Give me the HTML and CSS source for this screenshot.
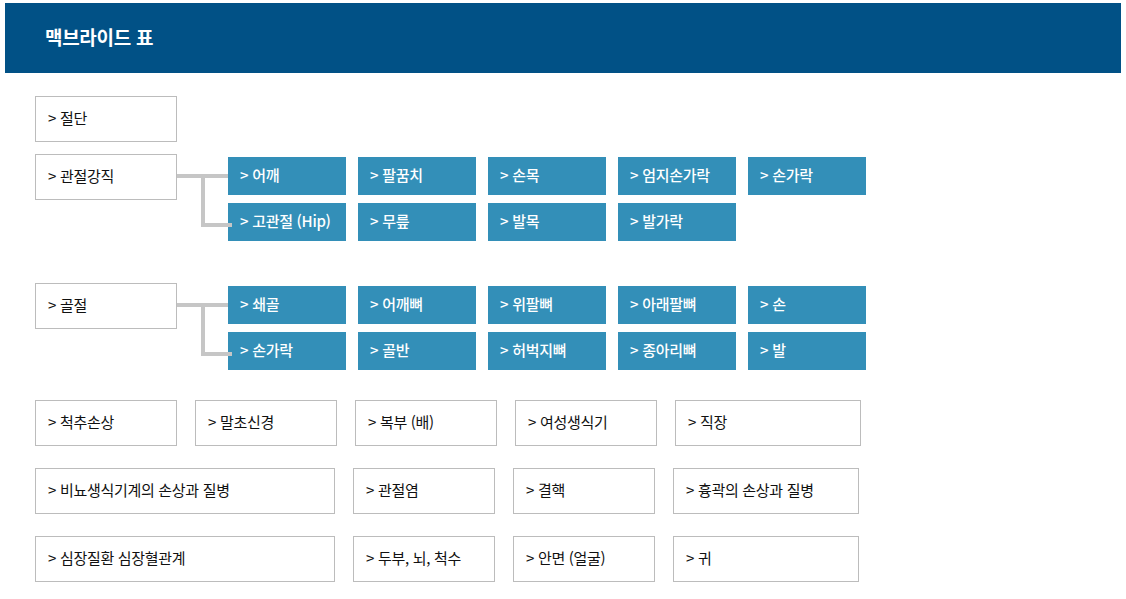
FILE: index.html
```html
<!DOCTYPE html>
<html lang="ko">
<head>
  <meta charset="UTF-8" />
  <meta name="viewport" content="width=device-width, initial-scale=1.0" />
  <title>맥브라이드 표</title>
  <link rel="stylesheet" href="styles.css">
</head>
<body>
  <header class="page-head">
    <h1>맥브라이드 표</h1>
  </header>

  <main class="mcbride">
    <div class="item">&gt; 절단</div>

    <div class="group">
      <div class="item">&gt; 관절강직</div>
      <div class="connector"></div>
      <ul class="sub-list">
        <li>&gt; 어깨</li>
        <li>&gt; 팔꿈치</li>
        <li>&gt; 손목</li>
        <li>&gt; 엄지손가락</li>
        <li>&gt; 손가락</li>
        <li>&gt; 고관절 (Hip)</li>
        <li>&gt; 무릎</li>
        <li>&gt; 발목</li>
        <li>&gt; 발가락</li>
      </ul>
    </div>

    <div class="group group-last">
      <div class="item">&gt; 골절</div>
      <div class="connector"></div>
      <ul class="sub-list">
        <li>&gt; 쇄골</li>
        <li>&gt; 어깨뼈</li>
        <li>&gt; 위팔뼈</li>
        <li>&gt; 아래팔뼈</li>
        <li>&gt; 손</li>
        <li>&gt; 손가락</li>
        <li>&gt; 골반</li>
        <li>&gt; 허벅지뼈</li>
        <li>&gt; 종아리뼈</li>
        <li>&gt; 발</li>
      </ul>
    </div>

    <div class="row">
      <div class="item">&gt; 척추손상</div>
      <div class="item">&gt; 말초신경</div>
      <div class="item">&gt; 복부 (배)</div>
      <div class="item">&gt; 여성생식기</div>
      <div class="item item-long">&gt; 직장</div>
    </div>

    <div class="row">
      <div class="item item-wide">&gt; 비뇨생식기계의 손상과 질병</div>
      <div class="item">&gt; 관절염</div>
      <div class="item">&gt; 결핵</div>
      <div class="item item-long">&gt; 흉곽의 손상과 질병</div>
    </div>

    <div class="row">
      <div class="item item-wide">&gt; 심장질환 심장혈관계</div>
      <div class="item">&gt; 두부, 뇌, 척수</div>
      <div class="item">&gt; 안면 (얼굴)</div>
      <div class="item item-long">&gt; 귀</div>
    </div>
  </main>
</body>
</html>
```

FILE: styles.css
```css
* {
  margin: 0;
  padding: 0;
  box-sizing: border-box;
  font-family: 'Noto Sans CJK KR', 'Noto Sans', sans-serif;
}

body {
  background: #fff;
  color: #111;
}

.page-head {
  margin: 3px 5px 0;
  height: 70px;
  background: #015186;
  display: flex;
  align-items: center;
  padding: 0 0 3px 40px;
}

.page-head h1 {
  color: #fff;
  font-size: 19px;
  font-weight: 700;
  letter-spacing: -0.3px;
  line-height: 1;
}

.mcbride {
  padding: 23px 0 0 35px;
}

.item {
  width: 142px;
  height: 46px;
  border: 1px solid #bcbcbc;
  background: #fff;
  display: flex;
  align-items: center;
  padding: 0 0 3px 12px;
  font-size: 15px;
  line-height: 1;
  letter-spacing: -0.3px;
  white-space: nowrap;
}

.mcbride > .item {
  margin-bottom: 12px;
}

.item-wide {
  width: 300px;
}

.item-long {
  width: 186px;
}

.group {
  display: flex;
  align-items: flex-start;
  margin-bottom: 42px;
}

.group-last {
  margin-bottom: 30px;
}

/* gray tree lines between parent box and sub items */
.connector {
  position: relative;
  width: 51px;
  height: 70px;
}

.connector::before {
  content: '';
  position: absolute;
  left: 0;
  top: 20px;
  width: 51px;
  height: 4px;
  background: #c6c6c6;
}

.connector::after {
  content: '';
  position: absolute;
  left: 24px;
  top: 20px;
  width: 27px;
  height: 49px;
  border-left: 4px solid #c6c6c6;
  border-bottom: 4px solid #c6c6c6;
}

.sub-list {
  list-style: none;
  margin-top: 3px;
  display: grid;
  grid-template-columns: repeat(5, 118px);
  gap: 8px 12px;
}

.sub-list li {
  height: 38px;
  background: #338fb8;
  color: #fff;
  display: flex;
  align-items: center;
  padding: 0 0 3px 12px;
  font-size: 15px;
  font-weight: 500;
  line-height: 1;
  letter-spacing: -0.3px;
  white-space: nowrap;
}

.row {
  display: flex;
  gap: 18px;
  margin-bottom: 22px;
}
```
